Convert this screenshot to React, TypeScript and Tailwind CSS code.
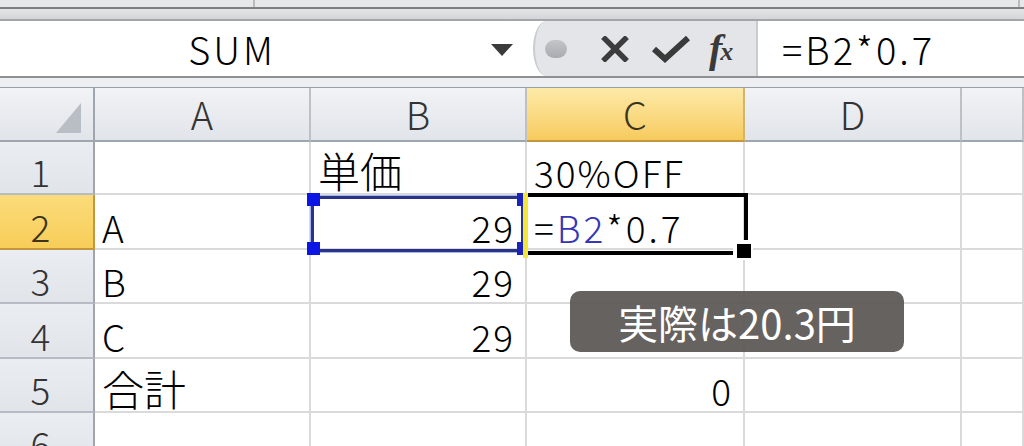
import React from "react";

const rowHeights = [53, 55, 54, 55, 54, 54];

type Cell = { text?: React.ReactNode; align?: "left" | "right"; cjk?: boolean; wide?: boolean };

const data: Cell[][] = [
  [{}, { text: "単価", cjk: true }, { text: "30%OFF" }, {}, {}],
  [
    { text: "A" },
    { text: "29", align: "right" },
    {
      wide: true,
      text: (
        <>
          =<span className="text-[#3535b5]">B2</span>*0.7
        </>
      ),
    },
    {},
    {},
  ],
  [{ text: "B" }, { text: "29", align: "right" }, {}, {}, {}],
  [{ text: "C" }, { text: "29", align: "right" }, {}, {}, {}],
  [{ text: "合計", cjk: true }, {}, { text: "0", align: "right" }, {}, {}],
  [{}, {}, {}, {}, {}],
];

const cols = ["A", "B", "C", "D", ""];

export default function App() {
  return (
    <div className="w-[1024px] h-[446px] overflow-hidden bg-white flex flex-col font-['Noto_Sans_CJK_JP','Noto_Sans',sans-serif] font-light text-black">
      {/* top strip */}
      <div className="h-[7px] shrink-0 bg-[#e7e8ea] flex">
        <div className="w-[255px] border-r-2 border-[#b9bbbe]" />
        <div className="w-[765px] border-r-2 border-[#b9bbbe]" />
      </div>
      <div className="h-[2px] shrink-0 bg-[#7e8082]" />
      <div className="h-[10px] shrink-0 bg-gradient-to-b from-[#e4e5e7] to-[#d3d5d8]" />
      <div className="h-[2px] shrink-0 bg-[#a3a5a8]" />

      {/* formula bar */}
      <div className="h-[55px] shrink-0 flex bg-white">
        <div className="w-[533px] flex items-center">
          <div className="w-[464px] flex justify-center items-center text-[38px] leading-none tracking-[3px] pt-[1px]">
            SUM
          </div>
          <svg width="24" height="14" viewBox="0 0 24 14" className="ml-[26px] mt-[2px]">
            <polygon points="1,1 23,1 12,13" fill="#3b3b3b" />
          </svg>
        </div>
        <div className="w-[225px] relative bg-[#e3e5e9] border-r-2 border-[#a2a4a7] rounded-tl-[14px_28px] rounded-bl-[14px_28px] border-l-2 border-[#c9cbcf] flex items-center">
          <div className="ml-[10px] w-[22px] h-[18px] rounded-full bg-gradient-to-b from-[#c3c5c9] to-[#a9abb0]" />
          <svg width="28" height="26" viewBox="0 0 28 26" className="ml-[34px]">
            <path d="M4 3 L24 23 M24 3 L4 23" stroke="#3c3c3c" strokeWidth="5.5" strokeLinecap="square" />
          </svg>
          <svg width="40" height="30" viewBox="0 0 40 30" className="ml-[22px]">
            <path d="M3 15 L14 25 L37 4" stroke="#3a3a3a" strokeWidth="6" fill="none" strokeLinejoin="miter" />
          </svg>
          <div className="ml-[18px] font-['Liberation_Serif',serif] italic font-bold text-[#3a3a3a] leading-none flex items-end">
            <span className="text-[40px]">f</span>
            <span className="text-[26px] -ml-[2px] mb-[4px]">x</span>
          </div>
        </div>
        <div className="flex-1 flex items-center pl-[24px] text-[38px] leading-none tracking-[3px] pt-[1px]">
          =B2*0.7
        </div>
      </div>
      <div className="h-[2px] shrink-0 bg-[#8e9093]" />
      <div className="h-[10px] shrink-0 bg-[#eceef1] border-b-[1px] border-[#9aa0a8]" />

      {/* sheet */}
      <div className="relative flex-1">
        <div className="grid grid-cols-[95px_216px_216px_218px_217px_1fr]">
          {/* header row */}
          <div className="h-[54px] bg-gradient-to-b from-[#f1f3f6] to-[#e1e4e9] border-r-2 border-b-2 border-r-[#9fa6b0] border-b-[#9fa6b0] relative">
            <svg width="26" height="30" viewBox="0 0 26 30" className="absolute left-[56px] top-[15px]">
              <polygon points="25,0 25,30 0,30" fill="#b9bdc4" />
            </svg>
          </div>
          {cols.map((c, i) =>
            c === "C" ? (
              <div
                key={i}
                className="h-[54px] bg-gradient-to-b from-[#fdeaa8] to-[#f7cb5c] border-r-2 border-b-2 border-r-[#d2b46a] border-b-[#c4973f] flex items-center justify-center text-[38px] leading-none text-[#3b3320]"
              >
                {c}
              </div>
            ) : (
              <div
                key={i}
                className="h-[54px] bg-gradient-to-b from-[#f1f3f6] to-[#e1e4e9] border-r-2 border-b-2 border-r-[#bcc1c8] border-b-[#9fa6b0] flex items-center justify-center text-[38px] leading-none text-[#333]"
              >
                {c}
              </div>
            )
          )}

          {data.map((row, r) => (
            <React.Fragment key={r}>
              <div
                style={{ height: rowHeights[r] }}
                className={
                  r === 1
                    ? "bg-gradient-to-b from-[#fbdc7a] to-[#f7cd58] border-r-2 border-b-2 border-r-[#c4973f] border-b-[#c4973f] flex items-end justify-center pr-[12px] pb-[3px] text-[37px] leading-none text-[#3b3320]"
                    : "bg-gradient-to-b from-[#eaedf1] to-[#e1e4e9] border-r-2 border-b-2 border-r-[#9fa6b0] border-b-[#b7bcc4] flex items-end justify-center pr-[12px] pb-[3px] text-[37px] leading-none text-[#333]"
                }
              >
                {r + 1}
              </div>
              {row.map((cell, c) => (
                <div
                  key={c}
                  style={{ height: rowHeights[r] }}
                  className={
                    (cell.align === "right" ? "justify-end pr-[10px] " : "justify-start pl-[7px] ") +
                    (cell.cjk ? "text-[42px] " : cell.wide ? "text-[37px] tracking-[3px] " : "text-[37px] tracking-[2px] ") +
                    "flex items-end pb-[2px] leading-none border-r-2 border-b-2 border-[#dadada] whitespace-nowrap"
                  }
                >
                  {cell.text}
                </div>
              ))}
            </React.Fragment>
          ))}
        </div>

        {/* B2 copy-reference highlight */}
        <div className="absolute left-[311px] top-[108px] w-[213px] h-[56px] border-[3px] border-[#2a3486] shadow-[0_0_0_1px_#aab4ee]" />
        <div className="absolute left-[307px] top-[105px] w-[13px] h-[13px] bg-[#0b16e4]" />
        <div className="absolute left-[307px] top-[154px] w-[13px] h-[13px] bg-[#0b16e4]" />
        <div className="absolute left-[517px] top-[105px] w-[6px] h-[13px] bg-[#1a22b8]" />
        <div className="absolute left-[517px] top-[154px] w-[6px] h-[13px] bg-[#1a22b8]" />

        {/* C2 active cell */}
        <div className="absolute left-[528px] top-[105px] w-[220px] h-[62px] border-[4px] border-l-0 border-black" />
        <div className="absolute left-[523px] top-[105px] w-[5px] h-[65px] bg-[#f3e53a]" />
        <div className="absolute left-[733px] top-[152px] w-[20px] h-[20px] bg-white" />
        <div className="absolute left-[737px] top-[156px] w-[14px] h-[14px] bg-black" />

        {/* tooltip */}
        <div className="absolute left-[570px] top-[203px] w-[334px] h-[61px] rounded-[10px] bg-[rgba(92,88,85,0.94)] flex items-center justify-center text-white text-[40px] leading-none pt-[1px] font-normal">
          実際は20.3円
        </div>
      </div>
    </div>
  );
}
